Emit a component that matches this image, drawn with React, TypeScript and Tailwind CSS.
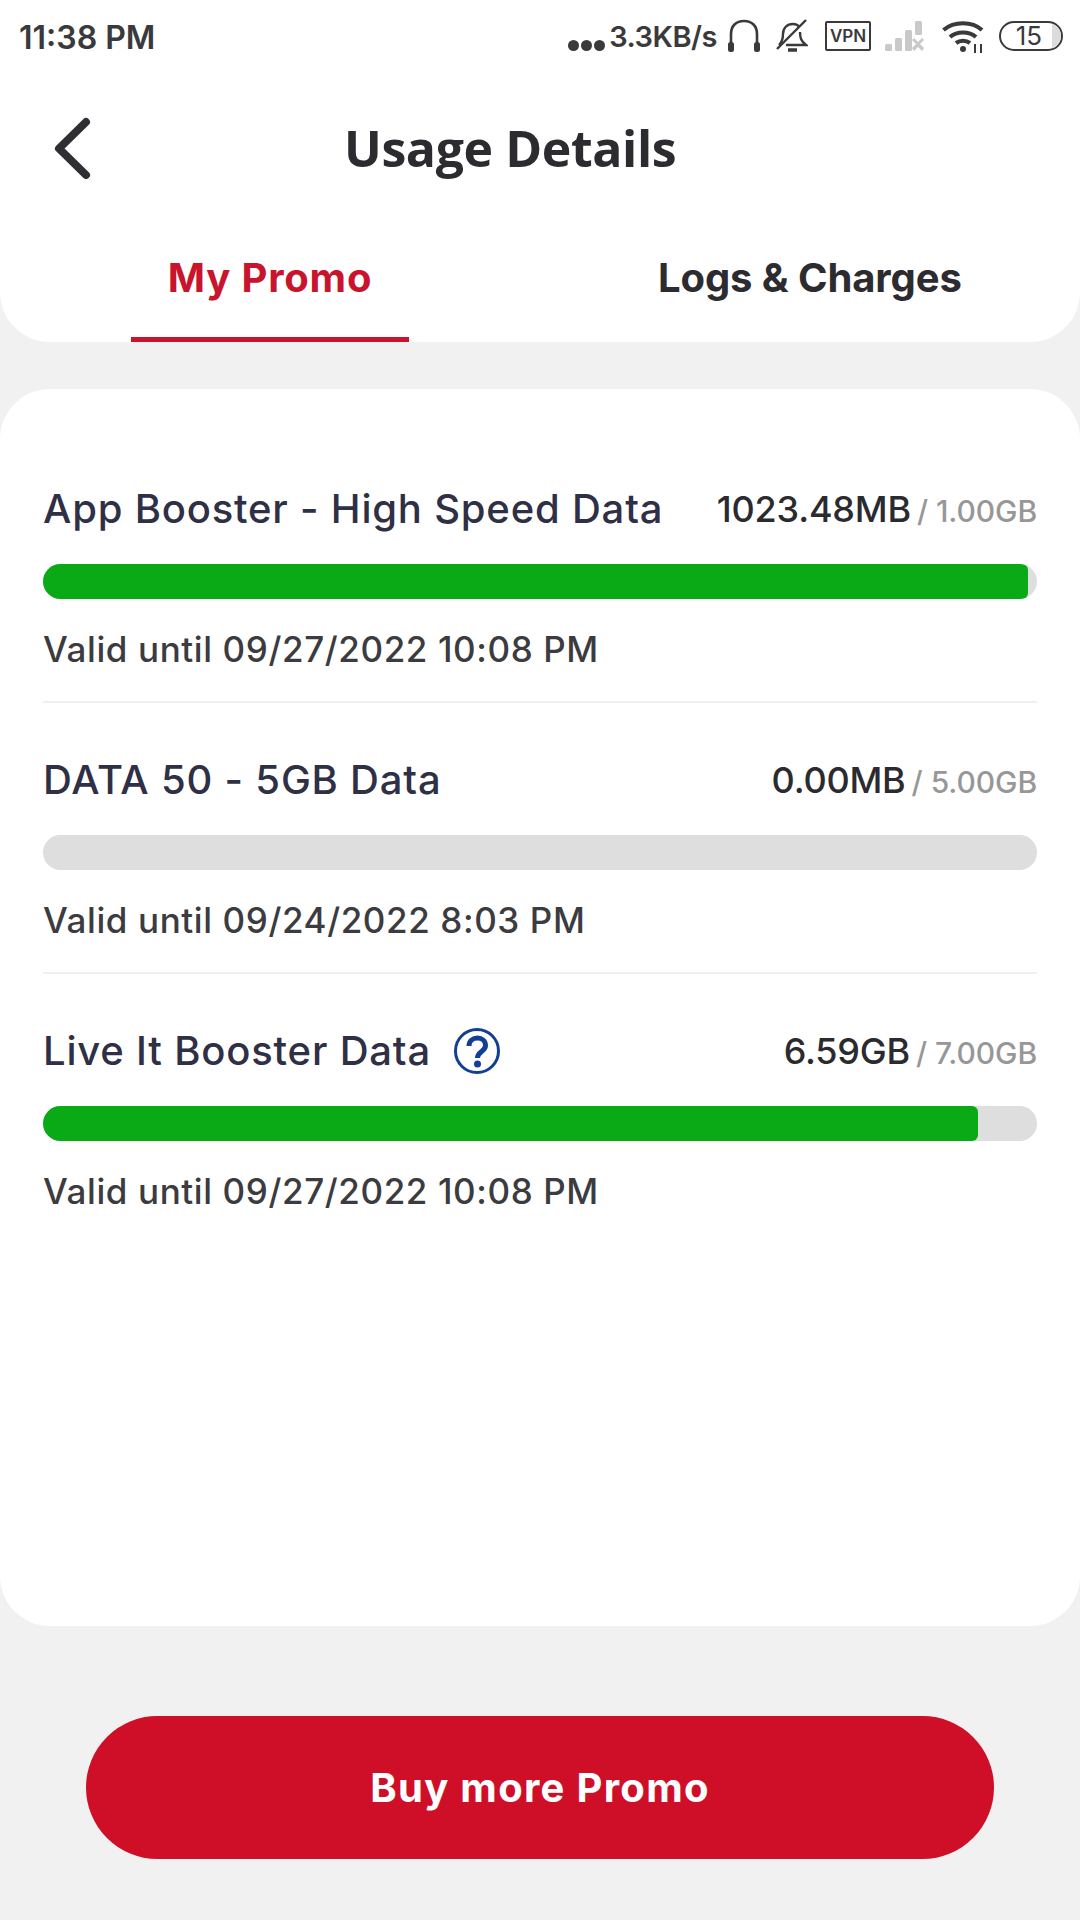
import React from "react";

const mont = "font-['Inter','Open_Sans',sans-serif]";

const rows = [
  { title: "App Booster - High Speed Data", used: "1023.48MB", total: "1.00GB", pct: 985, until: "Valid until 09/27/2022 10:08 PM" },
  { title: "DATA 50 - 5GB Data", used: "0.00MB", total: "5.00GB", pct: 0, until: "Valid until 09/24/2022 8:03 PM" },
  { title: "Live It Booster Data", used: "6.59GB", total: "7.00GB", pct: 935, until: "Valid until 09/27/2022 10:08 PM", help: true },
];

function StatusIcons() {
  return (
    <div className="flex items-center text-[#3a3a3c]">
      <span className="flex items-center gap-[2px] mt-[19px]">
        <i className="block w-[11px] h-[11px] rounded-full bg-[#3a3a3c]" />
        <i className="block w-[11px] h-[11px] rounded-full bg-[#3a3a3c]" />
        <i className="block w-[11px] h-[11px] rounded-full bg-[#3a3a3c]" />
      </span>
      <span className="ml-[4px] text-[29px] leading-none font-semibold font-['Inter',sans-serif] tracking-[-0.5px]">3.3KB/s</span>
      <svg width="36" height="34" viewBox="0 0 36 34" className="ml-[9px]" fill="none">
        <path d="M5 24V15C5 7 10 2 18 2S31 7 31 15v9" stroke="#3a3a3c" strokeWidth="2.6" />
        <rect x="2" y="23" width="6" height="10" rx="2.500" fill="#3a3a3c" />
        <rect x="28" y="23" width="6" height="10" rx="2.500" fill="#3a3a3c" />
      </svg>
      <svg width="32" height="34" viewBox="0 0 32 34" className="ml-[14px]" fill="none" stroke="#3a3a3c" strokeWidth="2.4">
        <path d="M3 26c3-3 4-6 4-11 0-6 4-10 10-10 2 0 5 1 6 3M24 13c0 6 1 9 6 13H10" />
        <path d="M1 30 30 1" />
        <path d="M12 31h9" strokeWidth="3.500" />
      </svg>
      <div className="ml-[17px] w-[46px] h-[30px] border-[2.5px] border-[#3a3a3c] rounded-[2px] flex items-center justify-center text-[17px] font-semibold leading-none font-['Inter',sans-serif]">VPN</div>
      <svg width="42" height="32" viewBox="0 0 42 32" className="ml-[13px]" fill="#c9c9c9">
        <rect x="1" y="24" width="7" height="7" rx="1.500" />
        <rect x="11" y="18" width="7" height="13" rx="1.500" />
        <rect x="21" y="10" width="7" height="21" rx="1.500" />
        <rect x="31" y="1" width="7" height="14" rx="1.500" />
        <path d="M30 18l4 4 4-4 2 2-4 4 4 4-2 3-4-4-4 4-2-3 4-4-4-4z" />
      </svg>
      <svg width="42" height="34" viewBox="0 0 42 34" className="ml-[16px]" fill="none" stroke="#3a3a3c" strokeWidth="4.200">
        <path d="M1.500 11C12 2 30 2 40 11" />
        <path d="M8 18c7-6 19-6 26 0" />
        <path d="M14 24c4-3 10-3 14 0" />
        <circle cx="21" cy="30" r="3" fill="#3a3a3c" stroke="none" />
        <path d="M33 25v9M39 25v9" strokeWidth="2" />
      </svg>
      <div className="ml-[15px] w-[64px] h-[30px] border-[2.5px] border-[#3a3a3c] rounded-full flex items-center justify-center text-[26px] leading-none font-['Inter',sans-serif] font-normal relative overflow-hidden">
        <span className="ml-[-4px]">15</span>
        <i className="absolute right-0 top-0 bottom-0 w-[9px] bg-[#dcdcdc]" />
      </div>
    </div>
  );
}

function Row({ r, last }: { r: (typeof rows)[number]; last: boolean }) {
  return (
    <div className={`h-[271px] pt-[55px] ${last ? "" : "border-b-2 border-[#f0f0f0]"}`}>
      <div className="flex items-center justify-between h-[44px]">
        <div className="flex items-center">
          <span className={`${mont} text-[40px] font-medium text-[#2f2f46] leading-none tracking-[0.8px]`}>{r.title}</span>
          {r.help && (
            <svg width="46" height="46" viewBox="0 0 46 46" className="ml-[23px]" fill="none">
              <circle cx="23" cy="23" r="21.5" stroke="#123f94" strokeWidth="3" />
              <path d="M15 18c0-5 4-8 8.500-8s8 3 8 7.500c0 6-8 6-8 12.500" stroke="#123f94" strokeWidth="5" />
              <circle cx="23.500" cy="36" r="3.500" fill="#123f94" />
            </svg>
          )}
        </div>
        <div className="flex items-baseline">
          <span className={`${mont} text-[36px] font-medium text-[#2b2b2f] leading-none tracking-[-0.2px]`}>{r.used}</span>
          <span className={`${mont} text-[30px] text-[#979797] font-medium leading-none ml-[6px] mr-[8px]`}>/</span>
          <span className={`${mont} text-[30px] text-[#979797] font-medium leading-none tracking-[-0.1px]`}>{r.total}</span>
        </div>
      </div>
      <div className="mt-[33px] h-[35px] rounded-full bg-[#dedede] overflow-hidden">
        <div className="h-full bg-[#0aaa17] rounded-r-[6px]" style={{ width: r.pct }} />
      </div>
      <div className={`${mont} mt-[30px] text-[35px] font-medium text-[#3b3b40] leading-[40px] tracking-[0.6px]`}>{r.until}</div>
    </div>
  );
}

export default function App() {
  return (
    <div className="w-[1080px] h-[1920px] bg-[#f1f1f1] overflow-hidden flex flex-col">
      <div className="bg-white rounded-b-[50px] h-[342px] flex flex-col">
        <div className="h-[72px] flex items-center justify-between pl-[19px] pr-[17px]">
          <span className="mt-[4px] text-[32px] font-semibold text-[#3a3a3c] font-['Inter',sans-serif] leading-none tracking-[0px]">11:38 PM</span>
          <StatusIcons />
        </div>
        <div className="h-[152px] flex items-center relative">
          <svg width="46" height="68" viewBox="0 0 46 68" className="ml-[50px] mt-[2px]" fill="none">
            <path d="M36 7 9 33.500 36 60" stroke="#2f2f33" strokeWidth="8" strokeLinecap="round" strokeLinejoin="round" />
          </svg>
          <span className="absolute left-[344px] text-[50px] font-bold text-[#2c2c30] font-['Open_Sans',sans-serif] leading-none tracking-[-0.4px]">Usage Details</span>
        </div>
        <div className="flex-1 flex">
          <div className="w-[278px] ml-[131px] h-full border-b-[5px] border-[#c8142c] flex items-center justify-center pb-[6px]">
            <span className={`${mont} text-[40px] font-bold text-[#c8142c] leading-none tracking-[0.8px]`}>My Promo</span>
          </div>
          <div className="ml-[249px] h-full flex items-center pb-[11px]">
            <span className={`${mont} text-[40px] font-bold text-[#2c2c30] leading-none tracking-[-0.1px]`}>Logs &amp; Charges</span>
          </div>
        </div>
      </div>

      <div className="mt-[47px] h-[1237px] bg-white rounded-[50px] px-[43px] pt-[43px]">
        {rows.map((r, i) => (
          <Row key={r.title} r={r} last={i === rows.length - 1} />
        ))}
      </div>

      <div className="mt-[90px] mx-[86px] h-[143px] rounded-full bg-[#cf0f27] flex items-center justify-center">
        <span className={`${mont} text-[40px] font-bold text-white leading-none tracking-[1.3px]`}>Buy more Promo</span>
      </div>
    </div>
  );
}
